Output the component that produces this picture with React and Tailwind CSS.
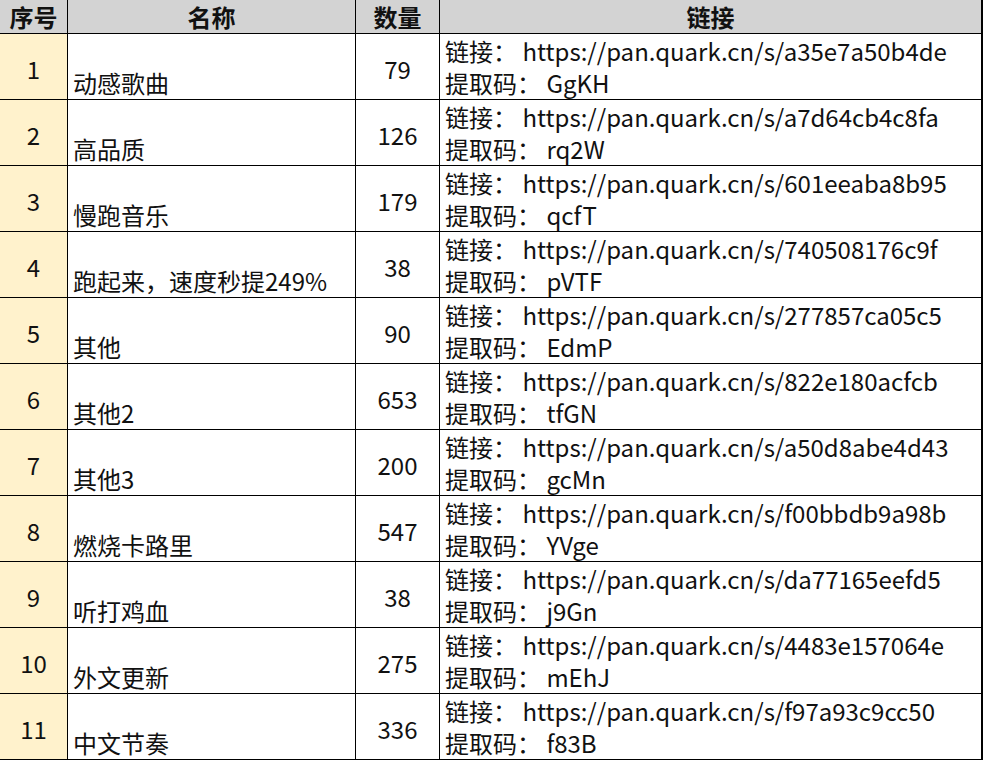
const rows = [
  { n: 1, name: "动感歌曲", count: 79, link: "https://pan.quark.cn/s/a35e7a50b4de", code: "GgKH" },
  { n: 2, name: "高品质", count: 126, link: "https://pan.quark.cn/s/a7d64cb4c8fa", code: "rq2W" },
  { n: 3, name: "慢跑音乐", count: 179, link: "https://pan.quark.cn/s/601eeaba8b95", code: "qcfT" },
  { n: 4, name: "跑起来，速度秒提249%", count: 38, link: "https://pan.quark.cn/s/740508176c9f", code: "pVTF" },
  { n: 5, name: "其他", count: 90, link: "https://pan.quark.cn/s/277857ca05c5", code: "EdmP" },
  { n: 6, name: "其他2", count: 653, link: "https://pan.quark.cn/s/822e180acfcb", code: "tfGN" },
  { n: 7, name: "其他3", count: 200, link: "https://pan.quark.cn/s/a50d8abe4d43", code: "gcMn" },
  { n: 8, name: "燃烧卡路里", count: 547, link: "https://pan.quark.cn/s/f00bbdb9a98b", code: "YVge" },
  { n: 9, name: "听打鸡血", count: 38, link: "https://pan.quark.cn/s/da77165eefd5", code: "j9Gn" },
  { n: 10, name: "外文更新", count: 275, link: "https://pan.quark.cn/s/4483e157064e", code: "mEhJ" },
  { n: 11, name: "中文节奏", count: 336, link: "https://pan.quark.cn/s/f97a93c9cc50", code: "f83B" },
];

export default function App() {
  return (
    <div className="w-[983px] h-[760px] overflow-hidden bg-white text-[#111] font-['Noto_Sans_CJK_SC',sans-serif]">
      <div className="grid grid-cols-[68px_288px_84px_541px] border-r-2 border-black w-[983px]">
        <div className="h-[34px] bg-[#d3d3d3] border-r border-b border-black flex items-center justify-center text-[24px] font-bold leading-none">序号</div>
        <div className="h-[34px] bg-[#d3d3d3] border-r border-b border-black flex items-center justify-center text-[24px] font-bold leading-none">名称</div>
        <div className="h-[34px] bg-[#d3d3d3] border-r border-b border-black flex items-center justify-center text-[24px] font-bold leading-none">数量</div>
        <div className="h-[34px] bg-[#d3d3d3] border-b border-black flex items-center justify-center text-[24px] font-bold leading-none">链接</div>
        {rows.map((r) => (
          <div key={r.n} className="contents">
            <div className="h-[66px] bg-[#fff2cc] border-r border-b border-black flex items-center justify-center text-[24px] pt-1">{r.n}</div>
            <div className="h-[66px] border-r border-b border-black flex items-end pl-[5px] pb-0 text-[24px] leading-[33px]">{r.name}</div>
            <div className="h-[66px] border-r border-b border-black flex items-center justify-center text-[24px] pt-1">{r.count}</div>
            <div className="h-[66px] border-b border-black flex flex-col justify-center pl-[5px] text-[24px] leading-[32px]">
              <div>链接：&nbsp;{r.link}</div>
              <div>提取码：&nbsp;{r.code}</div>
            </div>
          </div>
        ))}
      </div>
    </div>
  );
}
